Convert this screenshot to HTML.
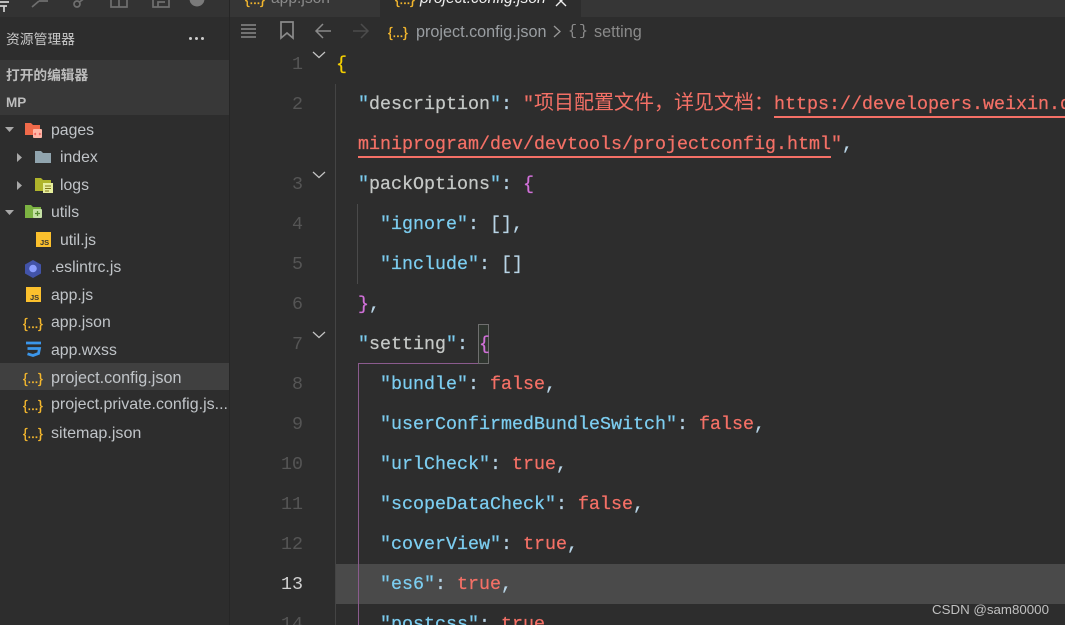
<!DOCTYPE html>
<html><head><meta charset="utf-8"><style>
html,body{margin:0;padding:0;width:1065px;height:625px;overflow:hidden}
body{background:#2d2d2d;font-family:"Liberation Sans","Noto Sans CJK SC",sans-serif}
#r{position:relative;width:1065px;height:625px;overflow:hidden;background:#2d2d2d}
#cw{position:absolute;left:0;top:3px;width:1065px;height:622px;overflow:hidden}
.a{position:absolute}
.f{position:absolute;left:0;font-size:15.8px;color:#c0c4c8;line-height:20px;white-space:nowrap}
.n{position:absolute;width:22px;left:281px;text-align:right;font:18.33px/24px "Liberation Mono",monospace;color:#555}
.c{position:absolute;white-space:pre;font:18.33px/24px "Liberation Mono","Noto Sans CJK SC",monospace;color:#b8d4e6;-webkit-text-stroke:.25px}
.k{color:#7ccdf0}.v{color:#f47066}.p{color:#d070d8}.y{color:#f5d000}.g{color:#c5c8c6}
.cj{font-size:20px;line-height:24px;-webkit-text-stroke:0}
.j{position:absolute;left:23px;color:#f5b82e;font:14px/20px "Liberation Sans",sans-serif;letter-spacing:-.3px;white-space:nowrap;-webkit-text-stroke:.3px}
svg{position:absolute;overflow:visible}
</style></head><body><div id="r">
<div class="a" style="left:0;top:0;width:229px;height:17px;background:#333"></div>
<div class="a" style="left:229px;top:0;width:836px;height:17px;background:#363636"></div>
<div class="a" style="left:380px;top:0;width:201px;height:17px;background:#2d2d2d"></div>
<div class="a" style="left:229px;top:0;width:1px;height:625px;background:#262626"></div>
<div class="a" style="left:0;top:60px;width:229px;height:55px;background:#383838"></div>
<div class="a" style="left:0;top:363px;width:229px;height:27px;background:#404040"></div>

<svg style="left:0;top:0" width="230" height="18" fill="none" stroke="#6f6f6f" stroke-width="1.700">
<path d="M0 2H9M0 6H7M4 6V12" stroke="#d0d0d0"/><path d="M32 7l7-6M39 1h9"/><circle cx="77" cy="4" r="3"/><path d="M79.500 2l4-3"/>
<path d="M111 0V7H127V0M119 0V7"/><path d="M153 0V7H169V0M158 7V2H165"/><circle cx="197" cy="-1" r="7.500" fill="#7a7a7a" stroke="none"/>
</svg>
<div class="a" style="left:245px;top:-11px;color:#f5b82e;font:14px/20px 'Liberation Sans',sans-serif;letter-spacing:-.3px;-webkit-text-stroke:.3px">{...}</div>
<div class="a" style="left:271px;top:-11px;color:#8a8a8a;font-size:15.6px;line-height:20px">app.json</div>
<div class="a" style="left:395px;top:-11px;color:#f5b82e;font:14px/20px 'Liberation Sans',sans-serif;letter-spacing:-.3px;-webkit-text-stroke:.3px">{...}</div>
<div class="a" style="left:420px;top:-11px;color:#f0f0f0;font-size:15.6px;line-height:20px;font-style:italic">project.config.json</div>
<svg style="left:555px;top:0" width="14" height="8" fill="none" stroke="#eee" stroke-width="1.400"><path d="M1-4L11 6M11-4L1 6"/></svg>

<div class="a" style="left:6px;top:30px;font-size:13.800px;line-height:20px;color:#c8c8c8">资源管理器</div>
<div class="a" style="left:189px;top:37px;width:3px;height:3px;border-radius:2px;background:#ccc;box-shadow:6px 0 #ccc,12px 0 #ccc"></div>
<div class="a" style="left:6px;top:66px;font-size:13.700px;line-height:20px;color:#bdbdbd;font-weight:bold">打开的编辑器</div>
<div class="a" style="left:6px;top:93px;font-size:13.500px;line-height:20px;color:#bdbdbd;font-weight:bold">MP</div>

<svg style="left:0;top:115px" width="60" height="170">
<path d="M5 12h9l-4.500 5z" fill="#a8a8a8"/><path d="M17 38v9l5-4.500z" fill="#a8a8a8"/><path d="M17 66v9l5-4.500z" fill="#a8a8a8"/><path d="M5 95h9l-4.500 5z" fill="#a8a8a8"/>
<path d="M25 8h6l2 2h7v10H25z" fill="#f06a4a"/><rect x="33" y="14" width="9" height="9" rx="1" fill="#ffb6a6"/><path d="M36 18l-1.500 1 1.500 1M39 18l1.500 1-1.500 1" stroke="#e55" fill="none"/>
<path d="M35 36h6l2 2h8v10H35z" fill="#90a4ae"/>
<path d="M35 63h6l2 2h8v11H35z" fill="#afb42b"/><rect x="43" y="68" width="10" height="10" fill="#e6ee9c"/><path d="M45 71h6M45 73.500h6M45 76h4" stroke="#827717"/>
<path d="M25 90h6l2 2h8v11H25z" fill="#7cb342"/><rect x="33" y="94" width="9" height="9" rx="1" fill="#c5e1a5"/><path d="M37.500 96v5M35 98.500h5" stroke="#558b2f" stroke-width="1.300"/>
<rect x="36" y="117" width="15" height="15" fill="#fbc02d"/><text x="40" y="130" font-family="Liberation Sans" font-size="7.500" font-weight="bold" fill="#333">JS</text>
<path d="M33 145l8 4.500v9l-8 4.500-8-4.500v-9z" fill="#4253a8"/><circle cx="33" cy="153.500" r="3.800" fill="#8c9eff"/>
</svg>
<svg style="left:0;top:280px" width="50" height="80">
<rect x="26" y="7" width="15" height="15" fill="#fbc02d"/><text x="30" y="20" font-family="Liberation Sans" font-size="7.500" font-weight="bold" fill="#333">JS</text>
<path d="M26 63H41M27.500 68.500H39.500L38.500 73.500L33 75.500L27.500 73.800" stroke="#3b96ea" stroke-width="2.800" fill="none"/>
</svg>
<div class="f" style="left:51px;top:121px">pages</div>
<div class="f" style="left:60px;top:148px">index</div>
<div class="f" style="left:60px;top:176px">logs</div>
<div class="f" style="left:51px;top:203px">utils</div>
<div class="f" style="left:60px;top:231px">util.js</div>
<div class="f" style="left:51px;top:258px">.eslintrc.js</div>
<div class="f" style="left:51px;top:286px">app.js</div>
<div class="j" style="top:313px">{...}</div><div class="f" style="left:51px;top:313px">app.json</div>
<div class="f" style="left:51px;top:341px">app.wxss</div>
<div class="j" style="top:368px">{...}</div><div class="f" style="left:51px;top:368px;font-size:16.200px">project.config.json</div>
<div class="j" style="top:395px">{...}</div><div class="f" style="left:51px;top:395px;font-size:16px">project.private.config.js...</div>
<div class="j" style="top:423px">{...}</div><div class="f" style="left:51px;top:423px;font-size:16.100px">sitemap.json</div>

<svg style="left:235px;top:17px" width="140" height="28" fill="none" stroke="#8a8a8a" stroke-width="1.400">
<path d="M6 8h15M6 12h15M6 16h15M6 20h15"/>
<path d="M46 5h12v16l-6-5-6 5z" stroke-width="1.700"/>
<path d="M96 14H81M88 7l-7 7 7 7" stroke-width="1.500"/>
<path d="M133 14h-15M126 7l7 7-7 7" stroke="#4c4c4c" stroke-width="1.500"/>
</svg>
<div class="a" style="left:388px;top:22px;color:#f5b82e;font:14px/20px 'Liberation Sans',sans-serif;letter-spacing:-.3px;-webkit-text-stroke:.3px">{...}</div>
<div class="a" style="left:416px;top:22px;color:#9a9ea2;font-size:16.200px;line-height:20px">project.config.json</div>
<svg style="left:553px;top:25px" width="10" height="14" fill="none" stroke="#999" stroke-width="1.300"><path d="M1 1l6 5.500-6 5.500"/></svg>
<div class="a" style="left:568px;top:22px;color:#8c8c8c;font:15px/20px 'Liberation Mono',monospace;letter-spacing:2px">{}</div>
<div class="a" style="left:594px;top:22px;color:#8a8a8a;font-size:16.200px;line-height:20px">setting</div>

<div class="a" style="left:335px;top:564px;width:730px;height:40px;background:#4a4a4a"></div>
<div class="a" style="left:335px;top:84px;width:1px;height:541px;background:#444"></div>
<div class="a" style="left:357px;top:204px;width:1px;height:80px;background:#4a4a4a"></div>
<div class="a" style="left:358px;top:363px;width:1px;height:262px;background:#8b5b8e"></div>
<div class="a" style="left:358px;top:363px;width:120px;height:1px;background:#8b5b8e"></div>
<div class="a" style="left:478px;top:324px;width:9px;height:38px;border:1px solid #6f6f6f;background:#2f352f"></div>

<svg style="left:311px;top:51px" width="16" height="310" fill="none" stroke="#c4c4c4" stroke-width="1.200">
<path d="M2 1l6 5.500 6-5.500M2 121l6 5.500 6-5.500M2 281l6 5.500 6-5.500"/></svg>

<div id="cw">
<div class="n" style="top:50px">1</div><div class="n" style="top:90px">2</div><div class="n" style="top:170px">3</div><div class="n" style="top:210px">4</div><div class="n" style="top:250px">5</div><div class="n" style="top:290px">6</div><div class="n" style="top:330px">7</div><div class="n" style="top:370px">8</div><div class="n" style="top:410px">9</div><div class="n" style="top:450px">10</div><div class="n" style="top:490px">11</div><div class="n" style="top:530px">12</div><div class="n" style="top:570px;color:#d0d0d0">13</div><div class="n" style="top:610px">14</div>

<div class="c" style="left:336px;top:50px"><span class="y">{</span></div>
<div class="c" style="left:358px;top:90px"><span class="k">"<span class="g">description</span>"</span>: <span class="v">"<span class="cj">项目配置文件，详见文档：</span><span style="border-bottom:2px solid #f47066;padding-bottom:1px">https://developers.weixin.qq.com/</span></span></div>
<div class="c" style="left:358px;top:130px"><span class="v" style="border-bottom:2px solid #f47066;padding-bottom:1px">miniprogram/dev/devtools/projectconfig.html</span><span class="v">"</span>,</div>
<div class="c" style="left:358px;top:170px"><span class="k">"<span class="g">packOptions</span>"</span>: <span class="p">{</span></div>
<div class="c" style="left:380px;top:210px"><span class="k">"ignore"</span>: [],</div>
<div class="c" style="left:380px;top:250px"><span class="k">"include"</span>: []</div>
<div class="c" style="left:358px;top:290px"><span class="p">}</span>,</div>
<div class="c" style="left:358px;top:330px"><span class="k">"<span class="g">setting</span>"</span>: <span class="p">{</span></div>
<div class="c" style="left:380px;top:370px"><span class="k">"bundle"</span>: <span class="v">false</span>,</div>
<div class="c" style="left:380px;top:410px"><span class="k">"userConfirmedBundleSwitch"</span>: <span class="v">false</span>,</div>
<div class="c" style="left:380px;top:450px"><span class="k">"urlCheck"</span>: <span class="v">true</span>,</div>
<div class="c" style="left:380px;top:490px"><span class="k">"scopeDataCheck"</span>: <span class="v">false</span>,</div>
<div class="c" style="left:380px;top:530px"><span class="k">"coverView"</span>: <span class="v">true</span>,</div>
<div class="c" style="left:380px;top:570px"><span class="k">"es6"</span>: <span class="v">true</span>,</div>
<div class="c" style="left:380px;top:610px"><span class="k">"postcss"</span>: <span class="v">true</span>,</div>
</div>
<div class="a" style="left:932px;top:601px;color:#c0c0c0;font-size:13.300px;line-height:18px">CSDN @sam80000</div>
</div></body></html>
